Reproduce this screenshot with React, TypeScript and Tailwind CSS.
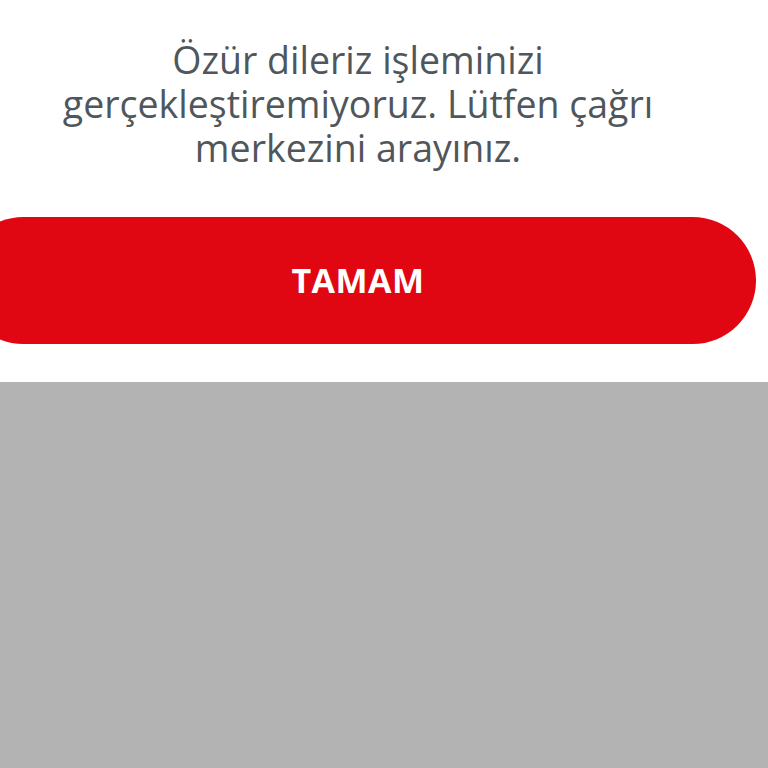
export default function App() {
  return (
    <div className="w-full h-[768px] flex flex-col bg-white overflow-hidden">
      {/* dialog */}
      <div className="h-[382px] shrink-0 bg-white overflow-hidden">
        <div className="ml-[-40px] w-[796px] flex flex-col items-center">
          <p className="pt-[38px] text-center text-[37.5px] leading-[44px] text-[#4f575c] font-['Open_Sans',sans-serif] font-normal">
            Özür dileriz işleminizi
            <br />
            gerçekleştiremiyoruz. Lütfen çağrı
            <br />
            merkezini arayınız.
          </p>
          <button className="mt-[47px] w-full h-[127px] rounded-full bg-[#e00612] text-white text-[34px] font-bold font-['Open_Sans',sans-serif] tracking-[0.5px]">
            TAMAM
          </button>
        </div>
      </div>
      {/* dimmed backdrop */}
      <div className="flex-1 bg-[#b3b3b3]" />
    </div>
  )
}
